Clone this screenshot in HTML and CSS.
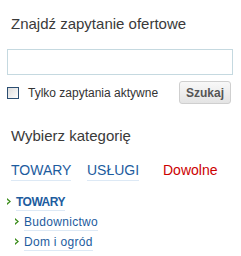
FILE: index.html
```html
<!DOCTYPE html>
<html lang="pl">
<head>
    <meta charset="UTF-8">
    <title>Znajdź zapytanie ofertowe</title>
    <link rel="stylesheet" href="styles.css">
</head>
<body>
    <div class="panel">
        <h2 class="title">Znajdź zapytanie ofertowe</h2>
        <input class="query" type="text">
        <div class="options">
            <label class="only-active"><span class="check"></span>Tylko zapytania aktywne</label>
            <button class="search-btn">Szukaj</button>
        </div>

        <h2 class="title title-cat">Wybierz kategorię</h2>
        <div class="tabs">
            <a class="tab">TOWARY</a>
            <a class="tab">USŁUGI</a>
            <a class="tab tab-any">Dowolne</a>
        </div>

        <!-- drzewko kategorii -->
        <ul class="tree">
            <li class="root"><span class="arrow"></span><a>TOWARY</a></li>
            <li class="sub"><span class="arrow"></span><a>Budownictwo</a></li>
            <li class="sub"><span class="arrow"></span><a>Dom i ogród</a></li>
        </ul>
    </div>
</body>
</html>
```

FILE: styles.css
```css
body {
    margin: 0;
    background: #fff;
    font-family: "Liberation Sans", Arial, sans-serif;
}

.panel {
    padding: 15px 8px 0 7px;
}

.title {
    margin: 0 0 0 4px;
    font-size: 15px;
    line-height: 18px;
    font-weight: normal;
    color: #3a3a3a;
}

.query {
    display: block;
    box-sizing: border-box;
    width: 226px;
    height: 26px;
    margin: 16px 0 0 0;
    border: 1px solid #c5d9e0;
    background: #fff;
    outline: none;
}

.options {
    display: flex;
    justify-content: space-between;
    align-items: center;
    width: 224px;
    margin-top: 6px;
}

.only-active {
    display: flex;
    align-items: center;
    gap: 9px;
    font-size: 12px;
    color: #333;
}

.check {
    box-sizing: border-box;
    width: 12px;
    height: 12px;
    border: 1px solid #2b4e72;
    background: linear-gradient(135deg, #dcdcdc, #fdfdfd);
}

.search-btn {
    box-sizing: border-box;
    width: 52px;
    height: 23px;
    padding: 0;
    border: 1px solid #cfcfcf;
    border-radius: 3px;
    background: linear-gradient(#f8f8f8, #e4e4e4);
    font-family: "Liberation Sans", Arial, sans-serif;
    font-size: 12px;
    font-weight: bold;
    color: #555;
}

.title-cat {
    margin-top: 23px;
}

.tabs {
    display: grid;
    grid-template-columns: 76px 76px 76px;
    margin: 17px 0 0 4px;
}

.tab {
    justify-self: start;
    font-size: 14px;
    line-height: 17px;
    padding-bottom: 1px;
    border-bottom: 1px solid #dde9f5;
    color: #1d5c9e;
}

.tab-any {
    color: #c00;
    border-bottom-color: transparent;
}

.tree {
    list-style: none;
    margin: 13px 0 0 0;
    padding: 0;
}

.tree li {
    display: flex;
    align-items: center;
    gap: 5px;
    margin-bottom: 3px;
}

.tree li.sub {
    padding-left: 8px;
}

.tree a {
    font-size: 12px;
    line-height: 16px;
    letter-spacing: 0.3px;
    color: #1d5c9e;
    border-bottom: 1px solid #dde9f5;
}

.tree li.root a {
    font-weight: bold;
    letter-spacing: -0.5px;
}

.arrow {
    width: 4px;
    height: 7px;
    margin-top: -2px;
    background: #3f8f1f;
    clip-path: polygon(0 0, 100% 50%, 0 100%, 0 72%, 55% 50%, 0 28%);
}
```
